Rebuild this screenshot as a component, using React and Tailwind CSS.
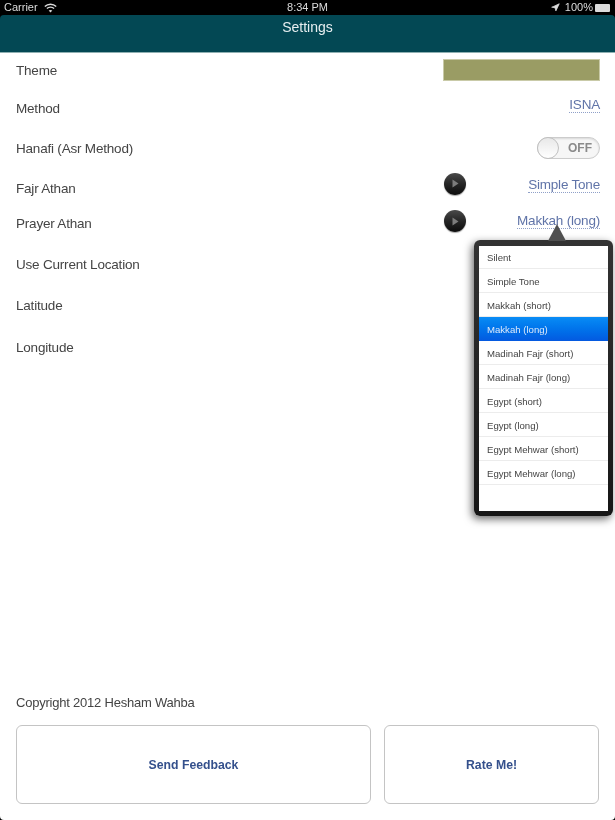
import { Navigation } from 'lucide-react'

const sounds = [
  'Silent',
  'Simple Tone',
  'Makkah (short)',
  'Makkah (long)',
  'Madinah Fajr (short)',
  'Madinah Fajr (long)',
  'Egypt (short)',
  'Egypt (long)',
  'Egypt Mehwar (short)',
  'Egypt Mehwar (long)',
]

function PlayButton({ className }) {
  return (
    <div className={`w-[22px] h-[22px] rounded-full flex items-center justify-center bg-gradient-to-b from-[#4a4a4a] via-[#262626] to-[#0c0c0c] shadow-[0_1px_1px_rgba(0,0,0,0.35)] ${className}`}>
      <svg width="7" height="9" viewBox="0 0 7 9" className="ml-px">
        <path d="M0.5 0.5 L6.5 4.5 L0.5 8.5 Z" fill="#7c7c7c" />
      </svg>
    </div>
  )
}

function Value({ children }) {
  return (
    <span className="text-[13.5px] leading-[15px] tracking-[-0.2px] text-[#6074a8] border-b border-dotted border-[#8fa0c8]">
      {children}
    </span>
  )
}

function Label({ children, className = '' }) {
  return <span className={`pt-[2px] text-[13.5px] tracking-[-0.2px] text-[#444444] ${className}`}>{children}</span>
}

function Row({ label, h, children }) {
  return (
    <div className={`flex items-center justify-between pl-4 pr-[15px] ${h}`}>
      <Label>{label}</Label>
      {children}
    </div>
  )
}

export default function App() {
  return (
    <div className="relative w-[615px] h-[820px] bg-black overflow-hidden blur-[0.4px] font-['Liberation_Sans',sans-serif]">
      <div className="flex items-center justify-between h-[15px] px-1 text-[11px] text-[#dcdcdc]">
        <div className="flex items-center gap-[6px] w-[150px]">
          <span>Carrier</span>
          <svg width="13" height="10" viewBox="0 0 13 10" fill="none" stroke="#dcdcdc">
            <path d="M0.8 3.6 C4 0.4 9 0.4 12.2 3.6" strokeWidth="1.4" />
            <path d="M2.9 5.6 C4.9 3.8 8.1 3.8 10.1 5.6" strokeWidth="1.4" />
            <path d="M6.5 9.5 L4.7 7.5 C5.7 6.7 7.3 6.7 8.3 7.5 Z" fill="#dcdcdc" stroke="none" />
          </svg>
        </div>
        <span>8:34 PM</span>
        <div className="flex items-center justify-end gap-[5px] w-[150px]">
          <Navigation className="w-[9px] h-[9px] text-[#dcdcdc] fill-[#dcdcdc]" />
          <span>100%</span>
          <div className="w-[15px] h-[8px] -ml-[3px] mr-[1px] bg-[#dcdcdc] rounded-[1px]" />
        </div>
      </div>

      <div className="h-[38px] rounded-t-[4px] bg-[#034854] border-b border-[#8fb0b2] text-center">
        <h1 className="pt-[3px] text-[14px] leading-[18px] text-[#e6eef0]">Settings</h1>
      </div>

      <div className="flex flex-col h-[767px] bg-white rounded-b-[4px]">
        <div>
          <Row label="Theme" h="h-[35px]">
            <div className="w-[157px] h-[22px] -mt-[2px] bg-[#9a9c64] border border-[#c9caa8]" />
          </Row>
          <Row label="Method" h="h-[40px]">
            <div className="-mt-[8px]">
              <Value>ISNA</Value>
            </div>
          </Row>
          <Row label="Hanafi (Asr Method)" h="h-[40px]">
            <div className="relative w-[63px] h-[22px] rounded-full bg-[#f6f6f6] border border-[#cccccc] shadow-[inset_0_1px_2px_rgba(0,0,0,0.12)]">
              <div className="absolute -left-px -top-px w-[22px] h-[22px] rounded-full bg-gradient-to-b from-[#e8e8e8] to-white border border-[#c0c0c0]" />
              <span className="absolute right-[7px] top-[3px] text-[12px] leading-[14px] font-bold text-[#8a8a8a]">OFF</span>
            </div>
          </Row>
          <div className="flex items-center h-[40px] pl-4 pr-[15px]">
            <Label className="w-[428px]">Fajr Athan</Label>
            <PlayButton className="-mt-[9px]" />
            <div className="flex-1 text-right -mt-[9px]">
              <Value>Simple Tone</Value>
            </div>
          </div>
          <div className="flex items-center h-[30px] pl-4 pr-[15px]">
            <Label className="w-[428px]">Prayer Athan</Label>
            <PlayButton className="-mt-[4px]" />
            <div className="flex-1 text-right -mt-[6px]">
              <Value>Makkah (long)</Value>
            </div>
          </div>
          <Row label="Use Current Location" h="h-[52px]" />
          <Row label="Latitude" h="h-[30px]" />
          <Row label="Longitude" h="h-[54px]" />
        </div>

        <p className="mt-auto pl-4 text-[13px] leading-[16px] tracking-[-0.22px] text-[#444444]">Copyright 2012 Hesham Wahba</p>
        <div className="flex gap-[13px] px-4 pt-[14px] pb-[16px]">
          <button className="w-[355px] h-[79px] pt-px rounded-[6px] border border-[#c4c4c4] text-[12.25px] font-bold text-[#34508c]">Send Feedback</button>
          <button className="w-[215px] h-[79px] pt-px rounded-[6px] border border-[#c4c4c4] text-[12.25px] font-bold text-[#34508c]">Rate Me!</button>
        </div>
      </div>

      <div className="absolute left-[474px] top-[240px] w-[139px] h-[276px] rounded-[6px] bg-gradient-to-b from-[#333333] to-[#161616] pt-[6px] px-[5px] pb-[5px] shadow-[-2px_3px_8px_rgba(0,0,0,0.6)]">
        <svg width="18" height="17" viewBox="0 0 18 17" className="absolute left-[74px] -top-[16px]">
          <path d="M9 0 L18 17 L0 17 Z" fill="#505050" />
        </svg>
        <div className="h-full bg-white overflow-hidden">
          <div className="-mt-px">
            {sounds.map((s) => (
              <div
                key={s}
                className={
                  s === 'Makkah (long)'
                    ? 'h-[24px] pl-[8px] pt-[2px] flex items-center text-[9.6px] text-[#dce9fb] bg-gradient-to-b from-[#0a8cf5] to-[#0459e0]'
                    : 'h-[24px] pl-[8px] pt-[3px] flex items-center text-[9.6px] text-[#444444] border-b border-[#ececec]'
                }
              >
                {s}
              </div>
            ))}
          </div>
        </div>
      </div>
    </div>
  )
}
